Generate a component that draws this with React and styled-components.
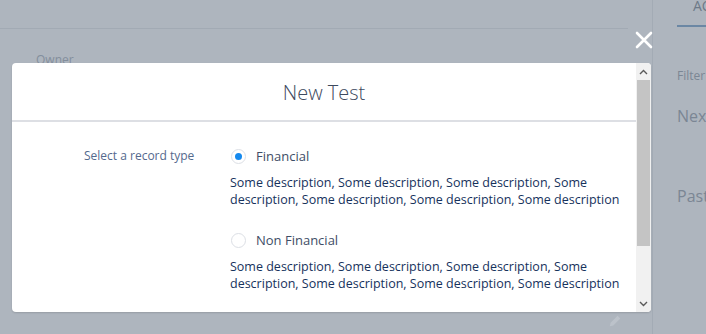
import React from 'react';
import styled, {createGlobalStyle} from 'styled-components';

const GlobalStyle = createGlobalStyle`
  html, body {
    margin: 0;
    padding: 0;
    width: 706px;
    height: 334px;
    overflow: hidden;
    background: #aeb5be;
  }
  * {
    box-sizing: border-box;
  }
`;

const options = [
  {id: 'fin', label: 'Financial', checked: true},
  {id: 'nonfin', label: 'Non Financial', checked: false}
];

const description = Array(7).fill('Some description').join(', ');

const Chevron = ({up}) => (
  <svg width="9" height="6" viewBox="0 0 9 6">
    <path d={up ? 'M1 5 L4.5 1.5 L8 5' : 'M1 1 L4.5 4.5 L8 1'} fill="none" stroke="#5a5a5a" strokeWidth="1.4"/>
  </svg>
);

const App = () => {
  return (
    <>
      <GlobalStyle/>
      <Page>
        <Main>
          <TopBar/>
          <FieldLabel>Owner</FieldLabel>
          <MainFooter>
            <PencilIcon viewBox="0 0 16 16">
              <path d="M2 14 L3 10 L11 2 L14 5 L6 13 Z" fill="#bcc2ca"/>
            </PencilIcon>
          </MainFooter>
        </Main>
        <SidePanel>
          <Tab>AC</Tab>
          <SideLabel>Filter</SideLabel>
          <SideHeading>Next</SideHeading>
          <SideHeading past>Past</SideHeading>
        </SidePanel>

        <Backdrop>
          <Modal>
            <CloseButton aria-label="Close">
              <svg width="18" height="18" viewBox="0 0 18 18">
                <path d="M2 2 L16 16 M16 2 L2 16" stroke="#fff" strokeWidth="2.6" strokeLinecap="round"/>
              </svg>
            </CloseButton>
            <ModalContent>
              <ModalHeader>New Test</ModalHeader>
              <ModalBody>
                <FormLabel>Select a record type</FormLabel>
                <OptionList>
                  {options.map(o =>
                    <Option key={o.id}>
                      <RadioRow>
                        <Radio checked={o.checked}/>
                        <OptionLabel>{o.label}</OptionLabel>
                      </RadioRow>
                      <Description>{description}</Description>
                    </Option>
                  )}
                </OptionList>
              </ModalBody>
            </ModalContent>
            <Scrollbar>
              <ScrollButton><Chevron up/></ScrollButton>
              <ScrollTrack>
                <ScrollThumb/>
              </ScrollTrack>
              <ScrollButton><Chevron/></ScrollButton>
            </Scrollbar>
          </Modal>
        </Backdrop>
      </Page>
    </>
  );
};

const Page = styled.div`
  position: relative;
  width: 706px;
  height: 334px;
  display: flex;
  font-family: "Open Sans", "Noto Sans", sans-serif;
  background: #aeb5be;
`;

const Main = styled.div`
  flex: 1;
  display: flex;
  flex-direction: column;
  border-right: 1px solid #a3abb5;
`;

const TopBar = styled.div`
  height: 29px;
  margin-right: 24px;
  border-bottom: 1px solid #a2aab4;
`;

const FieldLabel = styled.div`
  padding: 22px 0 0 36px;
  font-size: 12px;
  color: #838e9c;
`;

const MainFooter = styled.div`
  margin-top: auto;
  display: flex;
  justify-content: flex-end;
  padding: 0 30px 6px 0;
`;

const PencilIcon = styled.svg`
  width: 14px;
  height: 14px;
`;

const SidePanel = styled.div`
  width: 53px;
  padding-left: 24px;
  display: flex;
  flex-direction: column;
  white-space: nowrap;
  overflow: hidden;
  color: #7b8694;
`;

const Tab = styled.div`
  height: 29px;
  margin-top: -2px;
  padding-left: 16px;
  font-size: 14px;
  line-height: 16px;
  color: #6d7988;
  border-bottom: 2px solid #6b87a4;
`;

const SideLabel = styled.div`
  margin-top: 40px;
  font-size: 12px;
`;

const SideHeading = styled.div`
  margin-top: ${({past}) => past ? '58px' : '21px'};
  font-size: 16px;
`;

const Backdrop = styled.div`
  position: absolute;
  inset: 0;
  padding: 63px 55px 0 12px;
`;

const Modal = styled.div`
  position: relative;
  width: 639px;
  height: 249px;
  display: flex;
  background: #fff;
  border-radius: 4px;
  box-shadow: 0 1px 2px rgba(0, 0, 0, 0.14);
`;

const CloseButton = styled.button`
  position: absolute;
  top: -33px;
  right: -3px;
  width: 20px;
  height: 20px;
  padding: 1px;
  border: 0;
  background: transparent;
  display: flex;
  align-items: center;
  justify-content: center;
`;

const ModalContent = styled.div`
  flex: 1;
  overflow: hidden;
`;

const Scrollbar = styled.div`
  width: 15px;
  display: flex;
  flex-direction: column;
  background: #f1f1f1;
  border-radius: 0 4px 4px 0;
  overflow: hidden;
`;

const ScrollButton = styled.div`
  height: 17px;
  display: flex;
  align-items: center;
  justify-content: center;
`;

const ScrollTrack = styled.div`
  flex: 1;
`;

const ScrollThumb = styled.div`
  height: 166px;
  margin: 0 1px;
  background: #c4c4c4;
`;

const ModalHeader = styled.h2`
  margin: 0;
  height: 59px;
  display: flex;
  align-items: center;
  justify-content: center;
  font-size: 20px;
  font-weight: 300;
  color: #3d4a5e;
  border-bottom: 2px solid #dddfe4;
  padding-top: 1px;
`;

const ModalBody = styled.div`
  display: grid;
  grid-template-columns: 218px 396px;
  padding: 25px 0 50px 0;
`;

const FormLabel = styled.div`
  padding-left: 72px;
  font-size: 12px;
  line-height: 18px;
  color: #54698d;
`;

const OptionList = styled.div`
  display: flex;
  flex-direction: column;
  gap: 23px;
`;

const Option = styled.div`
  display: flex;
  flex-direction: column;
  gap: 9px;
`;

const RadioRow = styled.div`
  display: flex;
  align-items: center;
  gap: 10px;
  padding-left: 1px;
`;

const Radio = styled.span`
  width: 15px;
  height: 15px;
  border-radius: 50%;
  border: 1px solid #dcdfe5;
  background: #fff;
  display: flex;
  align-items: center;
  justify-content: center;
  &::after {
    content: '';
    width: 7px;
    height: 7px;
    border-radius: 50%;
    background: ${({checked}) => checked ? '#1589ee' : 'transparent'};
  }
`;

const OptionLabel = styled.span`
  font-size: 13px;
  line-height: 18px;
  color: #3e4d66;
`;

const Description = styled.div`
  font-size: 12.5px;
  line-height: 17px;
  color: #16325c;
`;

export default App;
